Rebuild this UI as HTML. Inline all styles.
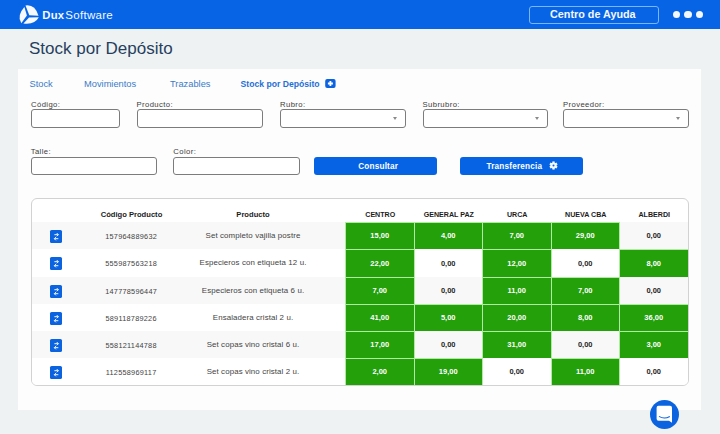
<!DOCTYPE html><html><head><meta charset="utf-8"><style>
*{margin:0;padding:0;box-sizing:border-box}
html,body{width:720px;height:434px;overflow:hidden;background:#eff2f3;font-family:"Liberation Sans",sans-serif;position:relative}
.a{position:absolute;white-space:nowrap}
#hdr{left:0;top:0;width:720px;height:28.8px;background:#0664e5}
#panel{left:18px;top:68.7px;width:683px;height:341.3px;background:#fdfdfd}
.title{left:29px;top:38.5px;font-size:17px;line-height:20px;color:#263f60}
.tab{top:79px;font-size:9.3px;line-height:11px;color:#3b7bc8}
.tabA{top:79px;font-size:8.65px;line-height:11px;color:#1f6fd6;font-weight:bold}
.lbl{font-size:7.7px;line-height:10px;color:#3c3c3c;letter-spacing:0.4px}
.inp{height:19px;border:1px solid #7c7c7c;border-radius:3px;background:#fff}
.arr{width:0;height:0;border-left:2.6px solid transparent;border-right:2.6px solid transparent;border-top:3px solid #8a8a8a}
.btn{top:157px;height:18px;background:#0663e4;border-radius:3px;color:#fff;font-weight:bold;font-size:8.2px;letter-spacing:0.2px;line-height:19px}
#card{left:31px;top:198px;width:658px;height:188px;border:1px solid #d2d2d2;border-radius:6px;background:#fff;overflow:hidden}
.th{top:209px;font-size:7.1px;line-height:9px;font-weight:bold;color:#1c1c1c;text-align:center}
.row{left:0;width:656px;height:27px}
.g{background:#24a00b;color:#fff;border:1px solid #b0eba2}
.w{color:#1f1f1f;border:1px solid transparent}
.cell{height:28px;text-align:center;font-size:7.5px;font-weight:bold;line-height:26px}
.tx{font-size:7.6px;line-height:26px;color:#444;text-align:center}
.ic{width:12.5px;height:12.5px;background:#0b63e0;border-radius:1.6px}
</style></head><body>
<div class="a" id="hdr"></div>
<div class="a" id="panel"></div>
<div class="a title">Stock por Depósito</div>
<div class="a tab" style="left:29.5px">Stock</div>
<div class="a tab" style="left:84px">Movimientos</div>
<div class="a tab" style="left:170px">Trazables</div>
<div class="a tabA" style="left:240.5px">Stock por Depósito</div>
<div class="a lbl" style="left:31px;top:99.8px">Código:</div>
<div class="a inp" style="left:31px;top:109px;width:89px"></div>
<div class="a lbl" style="left:136.5px;top:99.8px">Producto:</div>
<div class="a inp" style="left:136.5px;top:109px;width:126.0px"></div>
<div class="a lbl" style="left:280px;top:99.8px">Rubro:</div>
<div class="a inp" style="left:280px;top:109px;width:126px"></div>
<div class="a arr" style="left:393.4px;top:116.6px"></div>
<div class="a lbl" style="left:422.5px;top:99.8px">Subrubro:</div>
<div class="a inp" style="left:422.5px;top:109px;width:125.5px"></div>
<div class="a arr" style="left:535.4px;top:116.6px"></div>
<div class="a lbl" style="left:563px;top:99.8px">Proveedor:</div>
<div class="a inp" style="left:563px;top:109px;width:125.5px"></div>
<div class="a arr" style="left:675.9px;top:116.6px"></div>
<div class="a lbl" style="left:30.7px;top:146.8px">Talle:</div>
<div class="a inp" style="left:30.7px;top:156.7px;width:125.99999999999999px;height:18.2px"></div>
<div class="a lbl" style="left:173.3px;top:146.8px">Color:</div>
<div class="a inp" style="left:173.3px;top:156.7px;width:126.30000000000001px;height:18.2px"></div>
<div class="a btn" style="left:314.4px;width:123px;text-align:center;padding-left:4.6px">Consultar</div>
<div class="a btn" style="left:460.4px;width:122.5px;padding-left:26px">Transferencia</div>
<div class="a" id="card">
<div class="a th" style="left:68px;top:10.6px;width:63px;font-size:7.6px">Código Producto</div>
<div class="a th" style="left:191px;top:10.6px;width:60px;font-size:7.6px">Producto</div>
<div class="a th" style="left:314px;top:11.7px;width:68.5px">CENTRO</div>
<div class="a th" style="left:382.5px;top:11.7px;width:68.5px">GENERAL PAZ</div>
<div class="a th" style="left:451px;top:11.7px;width:68.5px">URCA</div>
<div class="a th" style="left:519.5px;top:11.7px;width:68.5px">NUEVA CBA</div>
<div class="a th" style="left:588px;top:11.7px;width:68.5px">ALBERDI</div>
<div class="a row" style="top:23px;height:27px;background:#f8f8f8"></div>
<svg class="a ic" style="left:17.8px;top:31px" width="12.5" height="12.5" viewBox="0 0 12.5 12.5"><path fill="none" stroke="#f4f8ff" stroke-width="1" d="M4.4,4.7 H8.3 M6.8,3.1 L8.4,4.7 L6.8,6.3 M8.3,8.7 H4.4 M5.9,7.1 L4.3,8.7 L5.9,10.3"/></svg>
<div class="a tx" style="left:59px;top:24.6px;width:80px;font-size:7.3px;letter-spacing:0.26px;padding-left:0.26px">157964889632</div>
<div class="a tx" style="left:161px;top:24.1px;width:120px;font-size:7.9px;letter-spacing:0.1px">Set completo vajilla postre</div>
<div class="a cell g" style="left:313px;top:23px;width:69.5px;height:28px;line-height:26px">15,00</div>
<div class="a cell g" style="left:381.5px;top:23px;width:69.5px;height:28px;line-height:26px">4,00</div>
<div class="a cell g" style="left:450px;top:23px;width:69.5px;height:28px;line-height:26px">7,00</div>
<div class="a cell g" style="left:518.5px;top:23px;width:69.5px;height:28px;line-height:26px">29,00</div>
<div class="a cell w" style="left:587px;top:23px;width:69.5px;height:28px;line-height:26px">0,00</div>
<div class="a row" style="top:50px;height:28px;background:#ffffff"></div>
<svg class="a ic" style="left:17.8px;top:58px" width="12.5" height="12.5" viewBox="0 0 12.5 12.5"><path fill="none" stroke="#f4f8ff" stroke-width="1" d="M4.4,4.7 H8.3 M6.8,3.1 L8.4,4.7 L6.8,6.3 M8.3,8.7 H4.4 M5.9,7.1 L4.3,8.7 L5.9,10.3"/></svg>
<div class="a tx" style="left:59px;top:51.6px;width:80px;font-size:7.3px;letter-spacing:0.26px;padding-left:0.26px">555987563218</div>
<div class="a tx" style="left:161px;top:51.1px;width:120px;font-size:7.9px;letter-spacing:0.1px">Especieros con etiqueta 12 u.</div>
<div class="a cell g" style="left:313px;top:50px;width:69.5px;height:29px;line-height:27px">22,00</div>
<div class="a cell w" style="left:381.5px;top:50px;width:69.5px;height:29px;line-height:27px">0,00</div>
<div class="a cell g" style="left:450px;top:50px;width:69.5px;height:29px;line-height:27px">12,00</div>
<div class="a cell w" style="left:518.5px;top:50px;width:69.5px;height:29px;line-height:27px">0,00</div>
<div class="a cell g" style="left:587px;top:50px;width:69.5px;height:29px;line-height:27px">8,00</div>
<div class="a row" style="top:78px;height:27px;background:#f8f8f8"></div>
<svg class="a ic" style="left:17.8px;top:86px" width="12.5" height="12.5" viewBox="0 0 12.5 12.5"><path fill="none" stroke="#f4f8ff" stroke-width="1" d="M4.4,4.7 H8.3 M6.8,3.1 L8.4,4.7 L6.8,6.3 M8.3,8.7 H4.4 M5.9,7.1 L4.3,8.7 L5.9,10.3"/></svg>
<div class="a tx" style="left:59px;top:79.6px;width:80px;font-size:7.3px;letter-spacing:0.26px;padding-left:0.26px">147778596447</div>
<div class="a tx" style="left:161px;top:79.1px;width:120px;font-size:7.9px;letter-spacing:0.1px">Especieros con etiqueta 6 u.</div>
<div class="a cell g" style="left:313px;top:78px;width:69.5px;height:28px;line-height:26px">7,00</div>
<div class="a cell w" style="left:381.5px;top:78px;width:69.5px;height:28px;line-height:26px">0,00</div>
<div class="a cell g" style="left:450px;top:78px;width:69.5px;height:28px;line-height:26px">11,00</div>
<div class="a cell g" style="left:518.5px;top:78px;width:69.5px;height:28px;line-height:26px">7,00</div>
<div class="a cell w" style="left:587px;top:78px;width:69.5px;height:28px;line-height:26px">0,00</div>
<div class="a row" style="top:105px;height:27px;background:#ffffff"></div>
<svg class="a ic" style="left:17.8px;top:113px" width="12.5" height="12.5" viewBox="0 0 12.5 12.5"><path fill="none" stroke="#f4f8ff" stroke-width="1" d="M4.4,4.7 H8.3 M6.8,3.1 L8.4,4.7 L6.8,6.3 M8.3,8.7 H4.4 M5.9,7.1 L4.3,8.7 L5.9,10.3"/></svg>
<div class="a tx" style="left:59px;top:106.6px;width:80px;font-size:7.3px;letter-spacing:0.26px;padding-left:0.26px">589118789226</div>
<div class="a tx" style="left:161px;top:106.1px;width:120px;font-size:7.9px;letter-spacing:0.1px">Ensaladera cristal 2 u.</div>
<div class="a cell g" style="left:313px;top:105px;width:69.5px;height:28px;line-height:26px">41,00</div>
<div class="a cell g" style="left:381.5px;top:105px;width:69.5px;height:28px;line-height:26px">5,00</div>
<div class="a cell g" style="left:450px;top:105px;width:69.5px;height:28px;line-height:26px">20,00</div>
<div class="a cell g" style="left:518.5px;top:105px;width:69.5px;height:28px;line-height:26px">8,00</div>
<div class="a cell g" style="left:587px;top:105px;width:69.5px;height:28px;line-height:26px">36,00</div>
<div class="a row" style="top:132px;height:27px;background:#f8f8f8"></div>
<svg class="a ic" style="left:17.8px;top:140px" width="12.5" height="12.5" viewBox="0 0 12.5 12.5"><path fill="none" stroke="#f4f8ff" stroke-width="1" d="M4.4,4.7 H8.3 M6.8,3.1 L8.4,4.7 L6.8,6.3 M8.3,8.7 H4.4 M5.9,7.1 L4.3,8.7 L5.9,10.3"/></svg>
<div class="a tx" style="left:59px;top:133.6px;width:80px;font-size:7.3px;letter-spacing:0.26px;padding-left:0.26px">558121144788</div>
<div class="a tx" style="left:161px;top:133.1px;width:120px;font-size:7.9px;letter-spacing:0.1px">Set copas vino cristal 6 u.</div>
<div class="a cell g" style="left:313px;top:132px;width:69.5px;height:28px;line-height:26px">17,00</div>
<div class="a cell w" style="left:381.5px;top:132px;width:69.5px;height:28px;line-height:26px">0,00</div>
<div class="a cell g" style="left:450px;top:132px;width:69.5px;height:28px;line-height:26px">31,00</div>
<div class="a cell w" style="left:518.5px;top:132px;width:69.5px;height:28px;line-height:26px">0,00</div>
<div class="a cell g" style="left:587px;top:132px;width:69.5px;height:28px;line-height:26px">3,00</div>
<div class="a row" style="top:159px;height:27px;background:#ffffff"></div>
<svg class="a ic" style="left:17.8px;top:167px" width="12.5" height="12.5" viewBox="0 0 12.5 12.5"><path fill="none" stroke="#f4f8ff" stroke-width="1" d="M4.4,4.7 H8.3 M6.8,3.1 L8.4,4.7 L6.8,6.3 M8.3,8.7 H4.4 M5.9,7.1 L4.3,8.7 L5.9,10.3"/></svg>
<div class="a tx" style="left:59px;top:160.6px;width:80px;font-size:7.3px;letter-spacing:0.26px;padding-left:0.26px">112558969117</div>
<div class="a tx" style="left:161px;top:160.1px;width:120px;font-size:7.9px;letter-spacing:0.1px">Set copas vino cristal 2 u.</div>
<div class="a cell g" style="left:313px;top:159px;width:69.5px;height:28px;line-height:26px">2,00</div>
<div class="a cell g" style="left:381.5px;top:159px;width:69.5px;height:28px;line-height:26px">19,00</div>
<div class="a cell w" style="left:450px;top:159px;width:69.5px;height:28px;line-height:26px">0,00</div>
<div class="a cell g" style="left:518.5px;top:159px;width:69.5px;height:28px;line-height:26px">11,00</div>
<div class="a cell w" style="left:587px;top:159px;width:69.5px;height:28px;line-height:26px">0,00</div>
</div>
<svg class="a" style="left:0;top:0" width="60" height="29" viewBox="0 0 60 29"><g fill="#f6f9ff"><path d="M24.4,7.0 Q16.35,15.85 21.3,23.3 L26.9,15.4 Z"/><path d="M25.5,5.4 Q35,4.05 38.5,15.7 L29.3,15.3 Z"/><path d="M38.8,17.3 Q34.9,24.85 23.4,23.4 L29,17.6 Z"/></g></svg>
<div class="a" style="left:42.3px;top:8.7px;font-size:11.3px;line-height:13px;color:#f6f9ff"><b style="letter-spacing:0.25px">Dux</b><span style="margin-left:0.9px;font-size:11.5px;letter-spacing:0.3px">Software</span></div>
<div class="a" style="left:529px;top:6px;width:129.5px;height:18px;border:1px solid #7ab6ff;border-radius:3px"></div>
<div class="a" style="left:550px;top:8.3px;font-size:10.8px;line-height:13px;font-weight:bold;color:#f4f8ff">Centro de Ayuda</div>
<div class="a" style="left:673.1px;top:10.8px;width:7.2px;height:7.2px;border-radius:50%;background:#f4f8ff"></div>
<div class="a" style="left:684.4px;top:10.8px;width:7.2px;height:7.2px;border-radius:50%;background:#f4f8ff"></div>
<div class="a" style="left:695.8px;top:10.8px;width:7.2px;height:7.2px;border-radius:50%;background:#f4f8ff"></div>
<svg class="a" style="left:325px;top:79px" width="11" height="9" viewBox="0 0 11 9"><rect x="0.2" y="0" width="10.4" height="9" rx="2" fill="#0b63e0"/><path d="M5.4,2 V7 M2.9,4.5 H7.9" stroke="#fff" stroke-width="1.8"/></svg>
<svg class="a" style="left:547.8px;top:160.2px" width="11" height="11" viewBox="-5.5 -5.5 11 11"><g fill="#f4f8ff"><circle r="3.1"/><rect x="-1.1" y="-4.1" width="2.2" height="8.2" transform="rotate(0)"/><rect x="-1.1" y="-4.1" width="2.2" height="8.2" transform="rotate(60)"/><rect x="-1.1" y="-4.1" width="2.2" height="8.2" transform="rotate(120)"/></g><circle r="1" fill="#0663e4"/></svg>
<div class="a" style="left:650px;top:400px;width:29px;height:29px;border-radius:50%;background:#0b63e0"></div>
<svg class="a" style="left:650px;top:400px" width="29" height="29" viewBox="0 0 29 29"><path fill="#fff" d="M8.5,5.7 H20 Q22,5.7 22,7.7 V22.8 L19,20.8 H8.5 Q6.6,20.8 6.6,18.8 V7.7 Q6.6,5.7 8.5,5.7 Z"/><path fill="none" stroke="#0b63e0" stroke-width="1.1" d="M9,16.4 Q14.3,19.6 19.8,16.4"/></svg>
</body></html>
